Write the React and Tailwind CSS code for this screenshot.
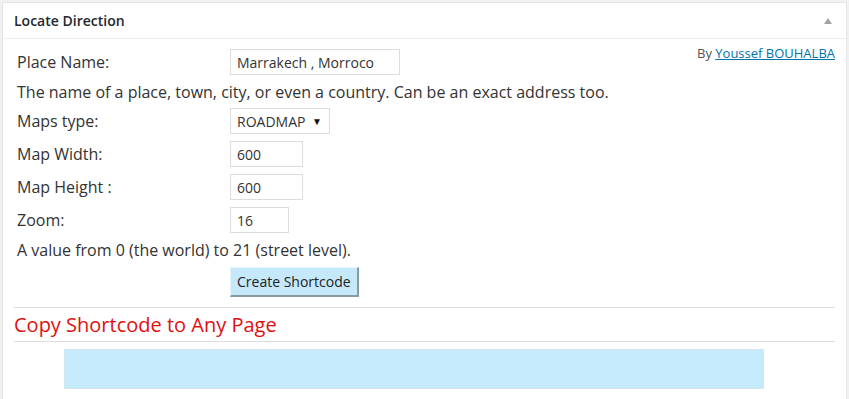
import React from 'react';

const font = { fontFamily: '"Open Sans", "Liberation Sans", sans-serif' };

function Field({ label, children }) {
  return (
    <div className="flex items-center h-[26px]">
      <span className="w-[213px] text-[16px] text-[#333]">{label}</span>
      {children}
    </div>
  );
}

export default function App() {
  return (
    <div className="w-[849px] h-[399px] bg-[#f1f1f1] pt-[2px] pl-[2px] pr-[2px] overflow-hidden" style={font}>
      <div className="h-[420px] bg-white border border-[#e5e5e5]">
        {/* Header */}
        <div className="h-[36px] border-b border-[#eee] flex items-center justify-between pl-[11px] pr-[14px]">
          <h3 className="text-[14px] font-semibold text-[#23282d]">Locate Direction</h3>
          <span className="w-0 h-0 border-l-[4px] border-r-[4px] border-b-[6px] border-l-transparent border-r-transparent border-b-[#a0a5aa]" />
        </div>

        {/* Form */}
        <div className="relative px-[11px] pt-[10px]">
          <div className="absolute right-[11px] top-[5px] text-[13px] text-[#555]">
            By <a href="#" className="text-[#0073aa] underline">Youssef BOUHALBA</a>
          </div>

          <div className="pl-[3px]">
            <Field label="Place Name:">
              <input
                defaultValue="Marrakech , Morroco"
                className="w-[170px] h-[26px] border border-[#ddd] px-[6px] text-[14px] text-[#333] outline-none"
              />
            </Field>
            <p className="h-[33px] flex items-center text-[16px] text-[#333]">
              The name of a place, town, city, or even a country. Can be an exact address too.
            </p>
            <div className="flex flex-col gap-[7px]">
              <Field label="Maps type:">
                <div className="w-[100px] h-[26px] border border-[#ddd] flex items-center justify-between pl-[6px] pr-[7px] text-[14px] text-[#333]">
                  <span>ROADMAP</span>
                  <span className="text-[10px] text-[#111]">▼</span>
                </div>
              </Field>
              <Field label="Map Width:">
                <input defaultValue="600" className="w-[73px] h-[26px] border border-[#ddd] px-[6px] text-[14px] text-[#333] outline-none" />
              </Field>
              <Field label="Map Height :">
                <input defaultValue="600" className="w-[73px] h-[26px] border border-[#ddd] px-[6px] text-[14px] text-[#333] outline-none" />
              </Field>
              <Field label="Zoom:">
                <input defaultValue="16" className="w-[59px] h-[26px] border border-[#ddd] px-[6px] text-[14px] text-[#333] outline-none" />
              </Field>
            </div>
            <p className="h-[34px] flex items-center text-[16px] text-[#333]">
              A value from 0 (the world) to 21 (street level).
            </p>
            <div className="pl-[213px]">
              <button className="h-[30px] px-[6px] bg-[#c5e9fb] text-[14px] text-[#222] border border-t-[#e4f4fc] border-l-[#e4f4fc] border-b-[#8a9aa3] border-r-[#8a9aa3] border-b-2 border-r-2">
                Create Shortcode
              </button>
            </div>
          </div>

          <div className="mt-[10px] border-t border-[#ddd]" />
          <h2 className="h-[33px] flex items-center text-[20px] text-[#e01010]">
            Copy Shortcode to Any Page
          </h2>
          <div className="border-t border-[#ddd]" />
          <div className="mt-[7px] ml-[50px] w-[700px] h-[40px] bg-[#c4eafb] border border-[#d3e6ee]" />
        </div>
      </div>
    </div>
  );
}
